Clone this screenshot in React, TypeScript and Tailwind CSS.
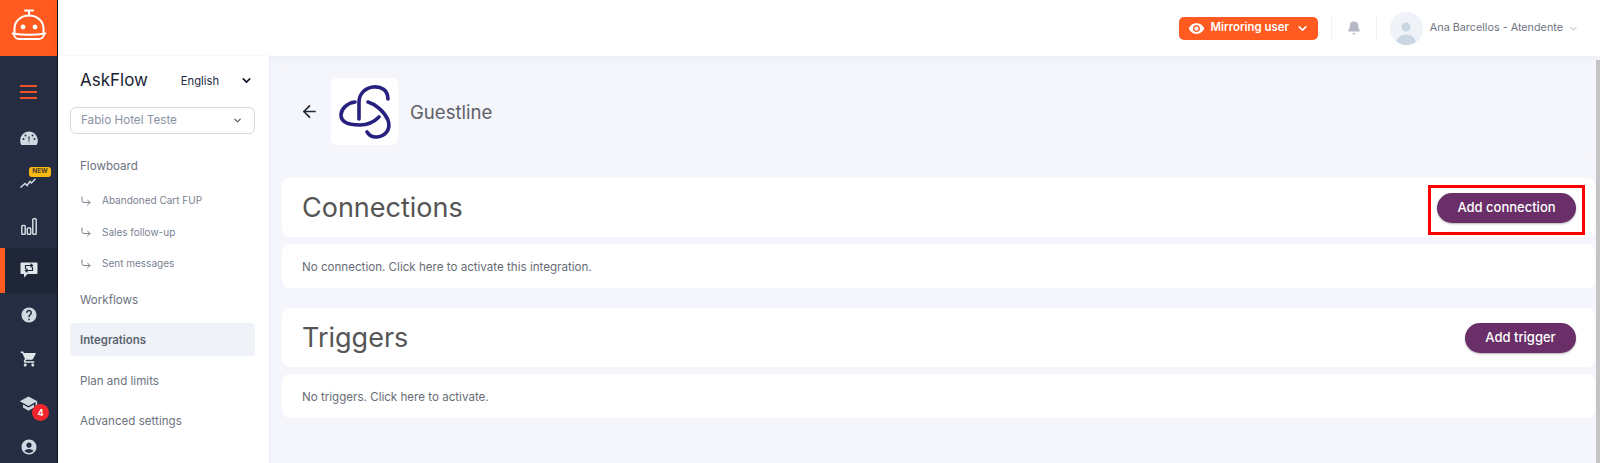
import { ArrowLeft, ChevronDown, CornerDownRight, Bell } from "lucide-react"
import { MdAccountCircle, MdHelp, MdSchool, MdShoppingCart, MdVisibility } from "react-icons/md"

const font = "font-['Inter',sans-serif]"

function BotLogo() {
  return (
    <svg width="36" height="32" viewBox="0 0 36 32" fill="none" stroke="white" strokeWidth="2" strokeLinecap="round">
      <path d="M14 1.500h8M18 1.500v5" />
      <path d="M3.500 24v-4.500C3.500 12 10 6.500 18 6.500s14.500 5.500 14.500 13V24" />
      <circle cx="12" cy="18" r="2.400" fill="white" stroke="none" />
      <circle cx="24" cy="18" r="2.400" fill="white" stroke="none" />
      <path d="M1.500 24.500c10 1.500 23 1.500 33 0" strokeWidth="1.800" />
      <path d="M3 26c1 3 2.500 4 5 4h20c2.500 0 4-1 5-4" strokeWidth="1.800" />
    </svg>
  )
}

function GaugeIcon() {
  return (
    <svg width="18" height="15" viewBox="0 0 18 15">
      <path d="M9 0.500C4 0.500 0.200 4.500 0.200 9.500c0 1.800.4 3.200 1.200 4.500h15.200c.8-1.300 1.200-2.700 1.200-4.500C17.600 4.500 14 .5 9 .5z" fill="#cfd9e0" />
      <path d="M9 13.500L8.300 5.500h1.400z" fill="#252d42" />
      <circle cx="3.500" cy="8" r="1" fill="#252d42" />
      <circle cx="5.500" cy="4.500" r="1" fill="#252d42" />
      <circle cx="12.500" cy="4.500" r="1" fill="#252d42" />
      <circle cx="14.500" cy="8" r="1" fill="#252d42" />
    </svg>
  )
}

function TrendIcon() {
  return (
    <svg width="16" height="10" viewBox="0 0 16 10" fill="none" stroke="#cfd9e0" strokeWidth="1.500">
      <path d="M0.500 9.500L5 5.500L7 7.500L10 3.500L11.500 5L15.500 0.800" />
    </svg>
  )
}

function BarsIcon() {
  return (
    <svg width="16" height="17" viewBox="0 0 16 17" fill="none" stroke="#cfd9e0" strokeWidth="1.500">
      <rect x="0.800" y="7.500" width="3.400" height="8.700" rx="0.800" />
      <rect x="6.300" y="10" width="3.400" height="6.200" rx="0.800" />
      <rect x="11.800" y="0.800" width="3.400" height="15.400" rx="0.800" />
    </svg>
  )
}

function ChatIcon() {
  return (
    <svg width="18" height="16" viewBox="0 0 18 16">
      <path d="M1.500 0.500h15c.6 0 1 .4 1 1v9.500c0 .6-.4 1-1 1H7.500L4 15.500V12H1.500c-.6 0-1-.4-1-1V1.500c0-.6.4-1 1-1z" fill="#dfe6ea" />
      <path d="M5.500 7V3.500h6.500M10.500 1.800L12.500 3.500 10.500 5.200M12.500 5V8.500H6M7.500 6.800L5.500 8.500 7.500 10.200" stroke="#1f2637" strokeWidth="1.200" fill="none" />
    </svg>
  )
}

// three interlaced strands, traced from the reference
function KnotLogo() {
  return (
    <svg width="60" height="60" viewBox="0 0 60 60" fill="none" stroke="#27207f" strokeWidth="3.600" strokeLinecap="round">
      <path d="M53 17C53 8 46 4 38 5C30 6 24 12 24 20L24 37" />
      <path d="M20 20C12 21 6 27 6 33C6 40 14 43 25 43C33 43 40 39 44 35" />
      <path d="M33 20C40 22 49 29 53 38C56 47 51 54 42 55C37 55.500 34 53 32 50" />
    </svg>
  )
}

function RailItem({ children, active }: { children: React.ReactNode; active?: boolean }) {
  return (
    <div className={`relative flex h-[44.500px] w-full shrink-0 items-center justify-center ${active ? "bg-[#1f2637]" : ""}`}>
      {active && <div className="absolute bottom-0 left-0 top-0 w-[4.500px] bg-[#ff5a1f]" />}
      {children}
    </div>
  )
}

function Rail() {
  return (
    <aside className="flex w-[58px] shrink-0 flex-col overflow-hidden border-r border-[#12151f] bg-[#252d42]">
      <div className="flex h-14 shrink-0 items-center justify-center bg-[#ff5a1f] pb-[6px]">
        <BotLogo />
      </div>
      <div className="flex h-[58.500px] shrink-0 items-center justify-center pt-[13px]">
        <div className="flex w-[17px] flex-col gap-[4px]">
          <div className="h-[2px] bg-[#f0532b]" />
          <div className="h-[2px] bg-[#f0532b]" />
          <div className="h-[2px] bg-[#f0532b]" />
        </div>
      </div>
      <RailItem>
        <div className="mt-[3px] flex">
          <GaugeIcon />
        </div>
      </RailItem>
      <RailItem>
        <div className="relative mt-[3px] -ml-[1px]">
          <TrendIcon />
          <span className="absolute -right-[15px] -top-[11px] flex h-[10px] w-[22px] items-center justify-center rounded-[3px] bg-[#fdb913] text-[6.500px] font-bold text-[#4a3f25]">
            NEW
          </span>
        </div>
      </RailItem>
      <RailItem>
        <div className="mt-[1px] flex">
          <BarsIcon />
        </div>
      </RailItem>
      <RailItem active>
        <ChatIcon />
      </RailItem>
      <RailItem>
        <MdHelp size={18} className="text-[#cfd9e0]" />
      </RailItem>
      <RailItem>
        <MdShoppingCart size={18} className="text-[#dfe6ea]" />
      </RailItem>
      <RailItem>
        <div className="relative">
          <MdSchool size={19} className="text-[#cfd9e0]" />
          <span className="absolute -bottom-[8px] -right-[11px] flex h-[17px] w-[17px] items-center justify-center rounded-full bg-[#f1262c] text-[9px] font-bold text-white">
            4
          </span>
        </div>
      </RailItem>
      <RailItem>
        <div className="-mt-[3px] flex">
          <MdAccountCircle size={18} className="text-[#cfd9e0]" />
        </div>
      </RailItem>
    </aside>
  )
}

const subItems = ["Abandoned Cart FUP", "Sales follow-up", "Sent messages"]

function SubMenu() {
  return (
    <aside className="flex w-[211px] shrink-0 flex-col bg-white pl-3 pr-[14px] pt-[14px] shadow-[0_0_2px_rgba(0,0,0,0.08)]">
      <div className="flex h-[22px] items-center justify-between pl-[10px] pr-[2px]">
        <span className="text-[17px] text-[#1b2333]">AskFlow</span>
        <div className="flex items-center gap-[21px] text-[11.200px] text-[#1e2a44]">
          <span>English</span>
          <ChevronDown size={13} strokeWidth={3} className="text-[#111827]" />
        </div>
      </div>
      <div className="mt-[15px] flex h-[27px] items-center justify-between rounded-md border border-[#d3d8e4] pl-[10px] pr-[11px] text-[11.700px] text-[#8b93a5]">
        <span>Fabio Hotel Teste</span>
        <ChevronDown size={11} strokeWidth={2.500} className="text-[#4b5563]" />
      </div>
      <div className="mt-[18px] flex h-[30px] items-center pl-[10px] text-[11.600px] text-[#6b7280]">Flowboard</div>
      <div className="mt-[3px] flex flex-col">
        {subItems.map((s) => (
          <div key={s} className="flex h-[31.500px] items-center gap-[10px] pl-[10px] text-[10px] text-[#7a8290]">
            <CornerDownRight size={12} strokeWidth={2} />
            <span>{s}</span>
          </div>
        ))}
      </div>
      <div className="mt-[1px] flex h-[40px] items-center pl-[10px] text-[11.600px] text-[#6b7280]">Workflows</div>
      <div className="mt-[2px] flex h-[33px] items-center rounded-[4px] bg-[#eff2f6] pl-[10px] pt-[3px] text-[11.400px] font-semibold text-[#5b6472]">
        Integrations
      </div>
      <div className="mt-[6px] flex h-[40px] items-center pl-[10px] text-[11.600px] text-[#6b7280]">Plan and limits</div>
      <div className="flex h-[40px] items-center pl-[10px] text-[11.600px] text-[#6b7280]">Advanced settings</div>
    </aside>
  )
}

function TopBar() {
  return (
    <header className="flex h-14 shrink-0 items-center justify-end bg-white pr-[21px] shadow-[0_2px_8px_rgba(0,0,0,0.04)]">
      <button className="flex h-[23px] w-[139px] items-center justify-center gap-[6px] rounded-[5px] bg-[#ff5a1f] text-[11.400px] font-semibold text-white">
        <MdVisibility size={17} />
        <span>Mirroring user</span>
        <ChevronDown size={13} strokeWidth={3} className="ml-[1px]" />
      </button>
      <div className="ml-[13px] h-6 w-px bg-[#eff1f5]" />
      <Bell size={14} fill="#b6b8c6" stroke="#b6b8c6" className="mx-[15px]" />
      <div className="h-6 w-px bg-[#eff1f5]" />
      <div className="ml-[13px] flex h-[33px] w-[33px] items-end justify-center overflow-hidden rounded-full bg-[#eff2f7]">
        <svg width="20" height="26" viewBox="0 0 20 26" fill="#cbd6e3">
          <circle cx="10" cy="8" r="4.500" />
          <path d="M0 26c0-7 4-10.500 10-10.500S20 19 20 26z" />
        </svg>
      </div>
      <span className="ml-[7px] text-[10.800px] text-[#6f7480]">Ana Barcellos - Atendente</span>
      <ChevronDown size={11} className="ml-[5px] text-[#a3a8b3]" />
    </header>
  )
}

function SectionHeader({ title, button }: { title: string; button: React.ReactNode }) {
  return (
    <div className="flex h-[59px] items-center justify-between rounded-lg bg-white pl-[20px] pr-[19px]">
      <h2 className="mt-[2px] text-[27px] font-normal text-[#555555]">{title}</h2>
      {button}
    </div>
  )
}

function PurpleButton({ label, width }: { label: string; width: string }) {
  return (
    <button className={`flex h-[30px] items-center justify-center rounded-full bg-[#6a2e68] text-[13px] font-medium text-white shadow-[0_1px_2px_rgba(0,0,0,0.3)] ${width}`}>
      {label}
    </button>
  )
}

function Note({ text }: { text: string }) {
  return (
    <div className="flex h-[44px] items-center rounded-lg bg-white pl-[20px] pt-[4px] text-[11.600px] text-[#676c76]">{text}</div>
  )
}

export default function App() {
  return (
    <div className={`flex h-[463px] w-[1600px] overflow-hidden bg-[#f4f6fb] ${font}`}>
      <Rail />
      <div className="flex min-w-0 flex-1 flex-col">
        <TopBar />
        <div className="flex min-h-0 flex-1">
          <SubMenu />
          <main className="min-w-0 flex-1 pl-[13px] pr-px pt-[9px]">
            <div className="flex h-[93px] items-center gap-[13px] rounded-lg bg-[#f5f6fb] pl-[19px]">
              <ArrowLeft size={19} strokeWidth={2.200} className="-ml-px text-[#1f2937]" />
              <div className="-ml-px flex h-[67px] w-[67px] items-center justify-center rounded-md bg-white">
                <KnotLogo />
              </div>
              <span className="-ml-px mt-[2px] text-[18.600px] text-[#5e6169]">Guestline</span>
            </div>
            <div className="mt-[20px] flex flex-col gap-[7px]">
              <div className="relative">
                <SectionHeader title="Connections" button={<PurpleButton label="Add connection" width="w-[139px]" />} />
                <div className="pointer-events-none absolute right-[10px] top-[7px] h-[50px] w-[157px] border-[3px] border-[#ff0000]" />
              </div>
              <Note text="No connection. Click here to activate this integration." />
            </div>
            <div className="mt-[20px] flex flex-col gap-[7px]">
              <SectionHeader title="Triggers" button={<PurpleButton label="Add trigger" width="w-[111px]" />} />
              <Note text="No triggers. Click here to activate." />
            </div>
          </main>
          <div className="mt-1 w-1 shrink-0 bg-[#c4c4c4]" />
        </div>
      </div>
    </div>
  )
}
